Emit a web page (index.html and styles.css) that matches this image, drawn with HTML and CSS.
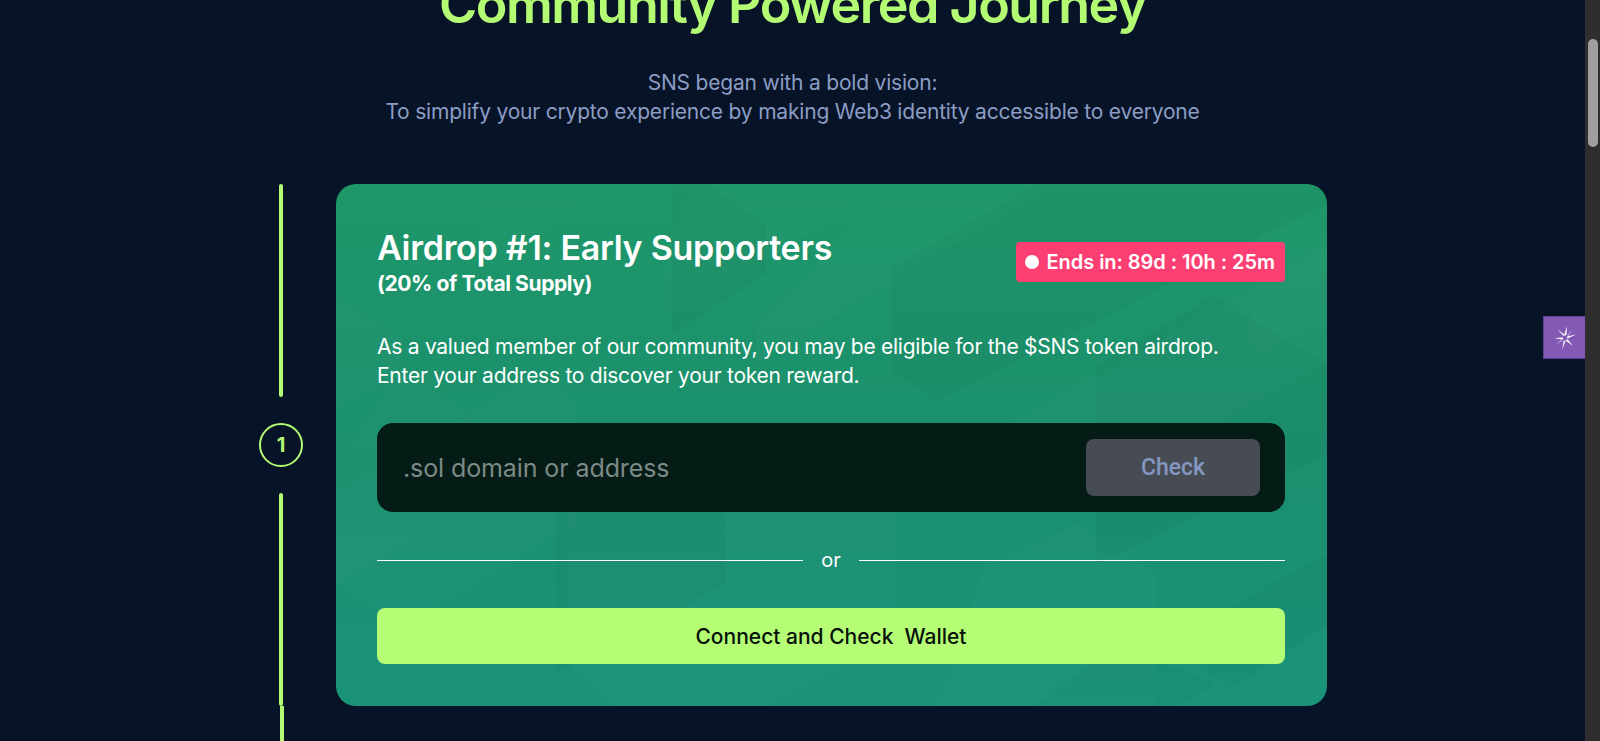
FILE: index.html
```html
<!DOCTYPE html>
<html lang="en">
<head>
<meta charset="utf-8">
<title>Community Powered Journey</title>
<link rel="stylesheet" href="styles.css">
</head>
<body>
<div class="window">
  <main class="page">
    <header class="intro">
      <h1 class="headline">Community Powered Journey</h1>
      <p class="lede">SNS began with a bold vision:<br>To simplify your crypto experience by making Web3 identity accessible to everyone</p>
    </header>
    <section class="timeline">
      <div class="step">
        <div class="rail">
          <span class="rail-line"></span>
          <span class="rail-num">1</span>
          <span class="rail-line"></span>
        </div>
        <article class="card">
          <svg class="card-pattern" viewBox="0 0 991 522" preserveAspectRatio="none" aria-hidden="true">
            <g fill="#fff" fill-opacity=".016">
              <polygon points="144,0 284,0 208,43 144,80"/>
              <polygon points="360,0 560,0 330,130 330,60"/>
              <polygon points="0,110 66,155 66,185 0,225"/>
              <polygon points="66,185 140,235 140,320 0,400 0,280"/>
              <polygon points="560,0 720,0 420,180 420,140"/>
              <polygon points="640,260 991,60 991,180 720,330 640,330"/>
              <polygon points="914,60 950,30 991,50 991,120 930,170 914,160"/>
              <polygon points="280,240 430,240 560,320 560,460 430,522 280,522 230,480 230,320"/>
              <polygon points="0,310 200,190 240,220 240,340 70,440 0,400"/>
              <polygon points="650,380 740,340 820,390 820,522 600,522"/>
            </g>
            <g fill="#000" fill-opacity=".022">
              <polygon points="556,84 700,0 991,0 991,20 600,217 556,187"/>
              <polygon points="760,184 876,112 991,180 991,270 760,380"/>
              <polygon points="220,330 300,280 390,330 390,400 220,490"/>
              <polygon points="780,460 880,500 840,522 700,522"/>
              <polygon points="880,430 991,370 991,440 895,505 820,455"/>
              <polygon points="336,0 336,150 430,90 430,40 372,0"/>
            </g>
          </svg>
          <div class="card-head">
            <div>
              <h2 class="card-title">Airdrop #1: Early Supporters</h2>
              <p class="card-share">(20% of Total Supply)</p>
            </div>
            <div class="countdown"><span class="countdown-dot"></span>Ends in: 89d : 10h : 25m</div>
          </div>
          <p class="card-text">As a valued member of our community, you may be eligible for the $SNS token airdrop.<br>Enter your address to discover your token reward.</p>
          <div class="lookup">
            <span class="lookup-placeholder">.sol domain or address</span>
            <button class="lookup-btn" type="button">Check</button>
          </div>
          <div class="divider"><span>or</span></div>
          <button class="connect-btn" type="button">Connect and Check&nbsp; Wallet</button>
        </article>
      </div>
      <div class="rail-next"></div>
    </section>
  </main>
  <aside class="scrollbar"><span class="scrollbar-thumb"></span></aside>
  <div class="widget">
    <svg width="24" height="24" viewBox="0 0 24 24" aria-hidden="true">
      <g fill="#fff">
        <polygon points="11,9 14,0 13.5,9.5" opacity=".9"/>
        <polygon points="14,10.5 23,8.5 14.5,12.5"/>
        <polygon points="14.5,13 20,20 12.5,14.5" opacity=".95"/>
        <polygon points="12.5,15 9,24 10.8,14.5"/>
        <polygon points="10,13.5 1,12 10,11.5"/>
        <polygon points="10.5,10 4,3 12,9" opacity=".9"/>
        <polygon points="9.5,14.5 3,19 8.5,13" opacity=".45"/>
        <polygon points="14.5,9 19,4 15.5,10.5" opacity=".4"/>
      </g>
    </svg>
  </div>
</div>
</body>
</html>
```
FILE: styles.css
```css
* { box-sizing: border-box; }
html, body { margin: 0; height: 100%; }
body { background: #071327; font-family: Inter, "Open Sans", sans-serif; overflow: hidden; }
.window { display: flex; height: 741px; overflow: hidden; }
.page { flex: 1; min-width: 0; height: 741px; overflow: hidden; }
.intro { margin-top: -29px; text-align: center; }
.headline { margin: 0; font-size: 52px; line-height: 68px; font-weight: 600; color: #b4fb74; letter-spacing: -1.5px; }
.lede { margin: 29px 0 0; font-size: 21px; line-height: 29px; color: #8c9dc4; letter-spacing: -0.2px; }
.timeline { width: 1069px; margin: 58px auto 0; }
.step { display: flex; gap: 32px; }
.rail { width: 46px; flex: none; display: flex; flex-direction: column; align-items: center; gap: 26px; }
.rail-line { flex: 1; width: 4px; background: #b4fb74; border-radius: 2px; }
.rail-num { width: 44px; height: 44px; flex: none; border: 2px solid #b4fb74; border-radius: 50%; display: flex; align-items: center; justify-content: center; color: #b4fb74; font-size: 20px; font-weight: 700; }
.rail-next { width: 4px; height: 60px; margin-left: 22px; background: #b4fb74; }
.card { position: relative; flex: 1; height: 522px; padding: 41px 42px 41px 41px; border-radius: 20px; overflow: hidden; color: #fff; background: linear-gradient(180deg, #1e9769 0%, #1b8f6e 55%, #1a9379 100%); }
.card-pattern { position: absolute; inset: 0; width: 100%; height: 100%; }
.card-head, .card-text, .lookup, .divider, .connect-btn { position: relative; }
.card-head { display: flex; justify-content: space-between; align-items: flex-start; }
.card-title { margin: 0; font-size: 34px; line-height: 46px; font-weight: 600; letter-spacing: -0.27px; }
.card-share { margin: 0; font-size: 21px; line-height: 26px; font-weight: 700; letter-spacing: -0.4px; }
.countdown { display: flex; align-items: center; gap: 8px; margin-top: 17px; height: 40px; padding: 0 10px 0 9px; background: #fb3f72; border-radius: 4px; font-size: 20px; font-weight: 600; letter-spacing: -0.05px; }
.countdown-dot { width: 14px; height: 14px; border-radius: 50%; background: #fff; }
.card-text { margin: 35px 0 0; font-size: 21px; line-height: 29px; letter-spacing: -0.26px; }
.lookup { display: flex; align-items: center; justify-content: space-between; height: 89px; margin-top: 33px; padding: 0 25px 0 26px; background: #041c15; border-radius: 16px; }
.lookup-placeholder { font-size: 25px; color: #7d8a87; letter-spacing: -0.1px; }
.lookup-btn { width: 174px; height: 57px; border: 0; border-radius: 8px; background: #474c54; color: #8497c1; font: 500 23px Roboto, sans-serif; }
.divider { display: flex; align-items: center; gap: 18px; height: 20px; margin-top: 38px; font-size: 20px; }
.divider::before, .divider::after { content: ""; flex: 1; height: 1px; background: #fff; }
.connect-btn { display: block; width: 100%; height: 56px; margin-top: 38px; border: 0; border-radius: 8px; background: #b4fd74; color: #06100a; font: 500 21px Inter, sans-serif; }
.scrollbar { width: 15px; flex: none; background: #2e2e2e; padding: 39px 2px 0 3px; }
.scrollbar-thumb { display: block; height: 108px; background: #9f9f9f; border-radius: 5px; }
.widget { position: absolute; left: 1543px; top: 316px; width: 42px; height: 43px; display: flex; align-items: center; justify-content: center; background: #8459b5; border: 1px solid #5e4390; border-right: 0; }
```
